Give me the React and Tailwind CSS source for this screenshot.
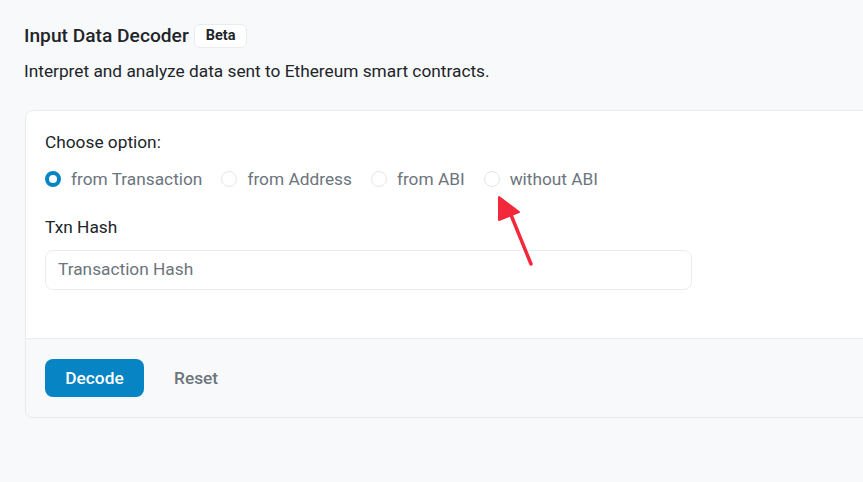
import React from "react";

const options = [
  { label: "from Transaction", checked: true },
  { label: "from Address" },
  { label: "from ABI" },
  { label: "without ABI" },
];

function Radio({ checked }) {
  return checked ? (
    <span className="box-border inline-block h-[16px] w-[16px] shrink-0 rounded-full border-[4.5px] border-[#0784c3] bg-white" />
  ) : (
    <span className="box-border inline-block h-[16px] w-[16px] shrink-0 rounded-full border border-[#e3e6ea] bg-white" />
  );
}

export default function App() {
  return (
    <div
      className="relative h-[482px] w-[863px] overflow-hidden bg-[#f8f9fb] pl-[24px] pt-[24px]"
      style={{ fontFamily: "Roboto, 'Noto Sans', sans-serif" }}
    >
      <div className="flex items-center gap-[5px]">
        <h1 className="text-[19.2px] font-medium leading-[24px] text-[#212529]">Input Data Decoder</h1>
        <span className="rounded-[6px] border border-[#e9ecef] bg-white px-[11px] py-[1px] text-[14.5px] font-bold leading-[20px] text-[#212529]">
          Beta
        </span>
      </div>
      <p className="mt-[12px] text-[17.3px] leading-[22px] text-[#212529]">
        Interpret and analyze data sent to Ethereum smart contracts.
      </p>
      <div className="mt-[28px] ml-[1px] w-[860px] overflow-hidden rounded-[8px] border border-[#e9ecef] bg-white shadow-[0_1px_2px_rgba(0,0,0,0.02)]">
        <div className="px-[19px] pt-[20px] pb-[48px]">
          <div className="text-[17.3px] leading-[22px] text-[#212529]">Choose option:</div>
          <div className="mt-[15px] flex items-center">
            {options.map((o, i) => (
              <label key={i} className="mr-[19px] flex items-center gap-[10px]">
                <Radio checked={o.checked} />
                <span className="text-[17.3px] leading-[22px] text-[#6c757d]">{o.label}</span>
              </label>
            ))}
          </div>
          <div className="mt-[26px] text-[17.3px] leading-[22px] text-[#212529]">Txn Hash</div>
          <div className="mt-[12px] flex h-[40px] w-[647px] items-center rounded-[8px] border border-[#e9ecef] bg-white px-[12px] text-[17.3px] text-[#6c757d]">
            Transaction Hash
          </div>
        </div>
        <div className="flex items-center gap-[30px] border-t border-[#e9ecef] bg-[#f8f9fa] px-[19px] py-[20px]">
          <button className="h-[38px] w-[99px] rounded-[8px] bg-[#0784c3] text-[17.3px] font-medium leading-[22px] text-white">
            Decode
          </button>
          <span className="text-[17.3px] font-medium leading-[22px] text-[#6c757d]">Reset</span>
        </div>
      </div>
      <svg className="absolute left-0 top-0" width="863" height="482" viewBox="0 0 863 482">
        <line x1="531" y1="264" x2="509" y2="210" stroke="#f2293a" strokeWidth="3.5" strokeLinecap="round" />
        <polygon points="499,197 499,220 519,212" fill="#f2293a" stroke="#f2293a" strokeWidth="2" strokeLinejoin="round" />
      </svg>
    </div>
  );
}
